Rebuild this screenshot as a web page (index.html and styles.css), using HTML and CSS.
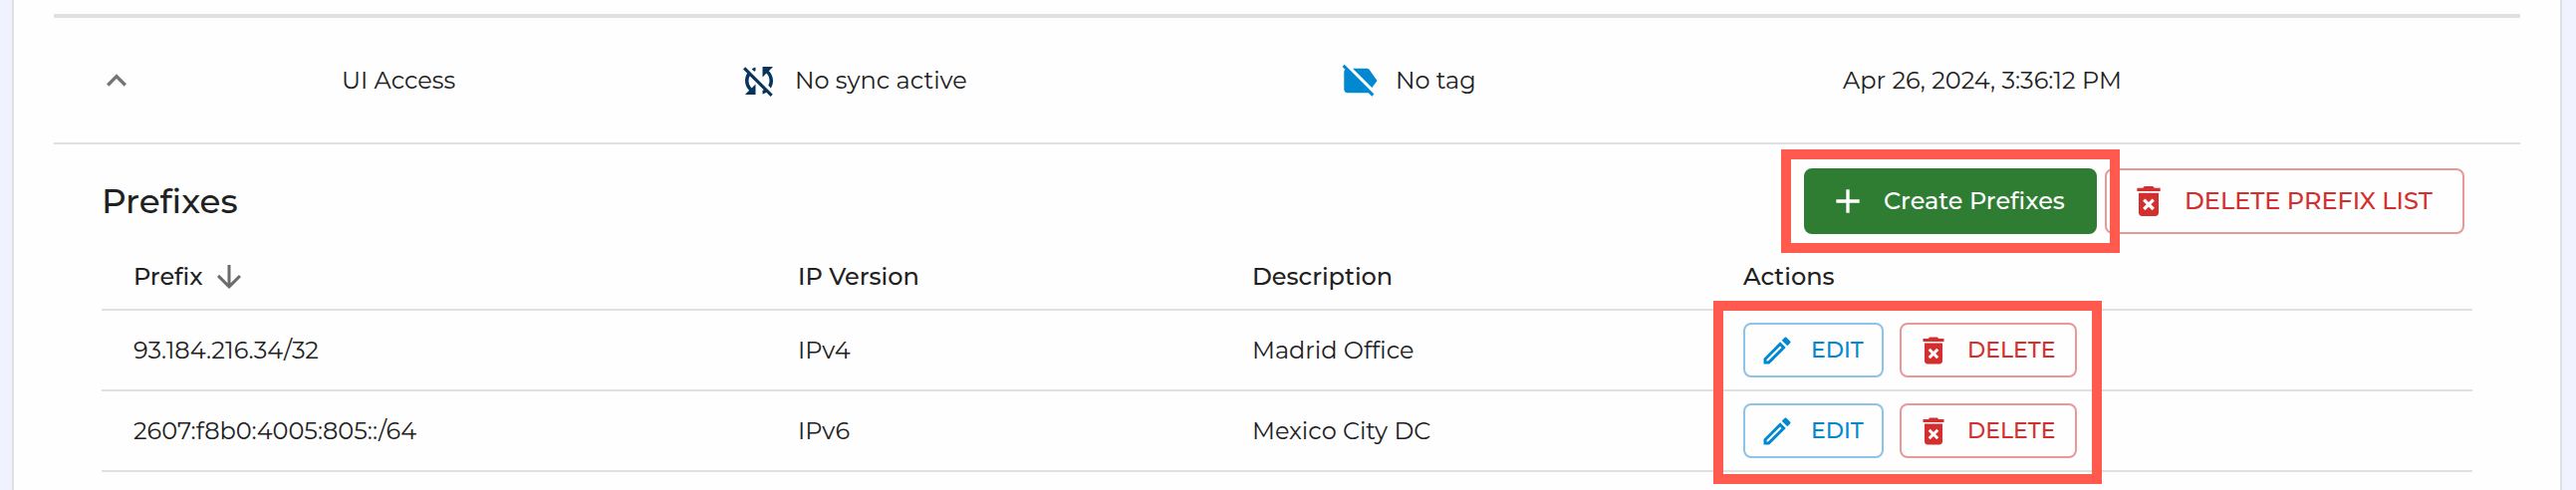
FILE: index.html
```html
<!DOCTYPE html>
<html lang="en">
<head>
<meta charset="utf-8">
<title>Prefix Lists</title>
<link rel="stylesheet" href="styles.css">
</head>
<body>
<svg class="defs" aria-hidden="true">
  <symbol id="i-edit" viewBox="0 0 24 24"><path d="m14.06 9.02.92.92L5.92 19H5v-.92l9.06-9.06M17.66 3c-.25 0-.51.1-.7.29l-1.83 1.83 3.75 3.75 1.83-1.83c.39-.39.39-1.02 0-1.41l-2.34-2.34c-.2-.2-.45-.29-.71-.29zm-3.6 3.19L3 17.25V21h3.75L17.81 9.94l-3.75-3.75z"/></symbol>
  <symbol id="i-delete" viewBox="0 0 24 24"><path d="M6 19c0 1.1.9 2 2 2h8c1.1 0 2-.9 2-2V7H6v12zm2.46-7.12 1.41-1.41L12 12.59l2.12-2.12 1.41 1.41L13.41 14l2.12 2.12-1.41 1.41L12 15.41l-2.12 2.12-1.41-1.41L10.59 14l-2.13-2.12zM15.5 4l-1-1h-5l-1 1H5v2h14V4z"/></symbol>
</svg>
<main class="card">
  <div class="list-row">
    <div class="cell cell-toggle"><svg class="icon-lg muted" viewBox="0 0 24 24"><path d="M7.41 15.41 12 10.83l4.59 4.58L18 14l-6-6-6 6z"/></svg></div>
    <div class="cell">UI Access</div>
    <div class="cell cell-status"><svg class="icon-xl navy" viewBox="0 0 24 24"><path d="M10 6.35V4.26c-.8.21-1.55.54-2.23.96l1.46 1.46c.25-.12.5-.24.77-.33zm-7.14-.94 2.36 2.36C4.45 8.99 4 10.44 4 12c0 2.21.91 4.2 2.36 5.64L4 20h6v-6l-2.24 2.24C6.68 15.15 6 13.66 6 12c0-1 .25-1.94.68-2.77l8.08 8.08c-.25.13-.5.25-.76.34v2.09c.8-.21 1.55-.54 2.23-.96l2.36 2.36 1.27-1.27L4.14 4.14 2.86 5.41zM20 4h-6v6l2.24-2.24C17.32 8.85 18 10.34 18 12c0 1-.25 1.94-.68 2.77l1.46 1.46C19.55 15.01 20 13.56 20 12c0-2.21-.91-4.2-2.36-5.64L20 4z"/></svg>No sync active</div>
    <div class="cell cell-status"><svg class="icon-xl blue" viewBox="0 0 24 24"><path d="m3.25 2.75 17 17L19 21l-2-2H5c-1.1 0-2-.9-2-2V7c0-.55.23-1.05.59-1.41L2 4l1.25-1.25zM22 12l-4.37-6.16C17.27 5.33 16.67 5 16 5H8l11 11 3-4z"/></svg>No tag</div>
    <div class="cell">Apr 26, 2024, 3:36:12 PM</div>
  </div>
  <section class="detail">
    <header class="toolbar">
      <h2 class="title">Prefixes</h2>
      <div class="toolbar-actions">
        <div class="marked">
          <button class="btn btn-create"><svg class="icon-lg" viewBox="0 0 24 24"><path d="M19 13h-6v6h-2v-6H5v-2h6V5h2v6h6z"/></svg>Create Prefixes</button>
          <div class="mark mark-create"></div>
        </div>
        <button class="btn btn-delete-list"><svg class="icon-lg"><use href="#i-delete"/></svg>DELETE PREFIX LIST</button>
      </div>
    </header>
    <div class="table">
      <div class="tr tr-head">
        <div class="cell">Prefix<svg class="icon-md sort" viewBox="0 0 24 24"><path d="m20 12-1.41-1.41L13 16.17V4h-2v12.17l-5.58-5.59L4 12l8 8 8-8z"/></svg></div>
        <div class="cell">IP Version</div>
        <div class="cell">Description</div>
        <div class="cell">Actions</div>
      </div>
      <div class="tr">
        <div class="cell">93.184.216.34/32</div>
        <div class="cell">IPv4</div>
        <div class="cell">Madrid Office</div>
        <div class="cell row-actions">
          <button class="btn btn-edit"><svg class="icon-md"><use href="#i-edit"/></svg><span class="label">EDIT</span></button>
          <button class="btn btn-delete"><svg class="icon-md"><use href="#i-delete"/></svg><span class="label">DELETE</span></button>
        </div>
      </div>
      <div class="tr">
        <div class="cell">2607:f8b0:4005:805::/64</div>
        <div class="cell">IPv6</div>
        <div class="cell">Mexico City DC</div>
        <div class="cell row-actions">
          <button class="btn btn-edit"><svg class="icon-md"><use href="#i-edit"/></svg><span class="label">EDIT</span></button>
          <button class="btn btn-delete"><svg class="icon-md"><use href="#i-delete"/></svg><span class="label">DELETE</span></button>
        </div>
      </div>
      <div class="mark mark-rows"></div>
    </div>
  </section>
</main>
</body>
</html>
```
FILE: styles.css
```css
* { box-sizing: border-box; }

body {
  margin: 0;
  height: 492px;
  overflow: hidden;
  background: #f0f3ff;
  color: #212121;
  font: 400 24px/1.22 Montserrat, Inter, sans-serif;
}

.defs { display: none; }

.card {
  height: 492px;
  margin: 0 14px 0 12px;
  padding: 14px 40px 0;
  border: solid #e0e0e0;
  border-width: 0 2px;
  background: #fefefe;
}

.list-row {
  display: grid;
  grid-template-columns: 289px 398px 603px 506px 1fr;
  height: 131px;
  border-top: 4px solid #e0e0e0;
  border-bottom: 2px solid #e0e0e0;
}

.cell { display: flex; align-items: center; white-space: nowrap; }
.cell-toggle { padding-left: 43px; }
.cell-status { gap: 15px; }

svg { display: block; flex: none; fill: currentColor; }
.icon-md { width: 36px; height: 36px; }
.icon-lg { width: 40px; height: 40px; }
.icon-xl { width: 42px; height: 42px; }
.muted { color: #757575; }
.navy { color: #07335c; }
.blue { color: #0288d1; }

.detail { padding: 24px 48px 0; }

.toolbar {
  display: flex;
  align-items: center;
  justify-content: space-between;
  height: 66px;
  margin-bottom: 10px;
  padding-right: 8px;
}
.title { margin: 0; padding-top: 1px; font-size: 34.2px; font-weight: 500; }
.toolbar-actions { display: flex; gap: 8px; }

.btn {
  display: flex;
  align-items: center;
  margin: 0;
  border: 2px solid;
  border-radius: 8px;
  background: transparent;
  font: 500 24px/1.22 Montserrat, Inter, sans-serif;
  white-space: nowrap;
}
.btn-create {
  width: 294px;
  height: 66px;
  padding: 0 0 0 22px;
  gap: 16px;
  border-color: #2e7d32;
  background: #2e7d32;
  color: #fff;
}
.btn-delete-list {
  width: 361px;
  height: 66px;
  padding: 0 0 0 22px;
  gap: 16px;
  border-color: #ea9797;
  color: #d32f2f;
}
.btn-edit, .btn-delete { height: 55px; font-size: 22px; gap: 16px; }
.btn-edit {
  width: 141px;
  padding: 0 0 0 14px;
  border-color: #8ec3e8;
  color: #0288d1;
}
.btn-delete {
  width: 178px;
  padding: 0 0 0 14px;
  border-color: #ea9797;
  color: #d32f2f;
}
.label { padding-top: 1px; }

.table { position: relative; }
.tr {
  display: grid;
  grid-template-columns: 667px 456px 493px 1fr;
  height: 81px;
  padding-left: 32px;
  border-bottom: 2px solid #e0e0e0;
}
.tr-head { height: 67px; font-weight: 500; }
.sort { margin-left: 8px; color: #6b6b6b; }
.row-actions { gap: 16px; }

/* Callout frames laid over the controls they highlight */
.marked { position: relative; z-index: 1; }
.mark { position: absolute; border: 10px solid #ff5a4d; pointer-events: none; }
.mark-create { inset: -19px -23px; }
.mark-rows { left: 1618px; top: 57px; width: 390px; height: 184px; }
```
